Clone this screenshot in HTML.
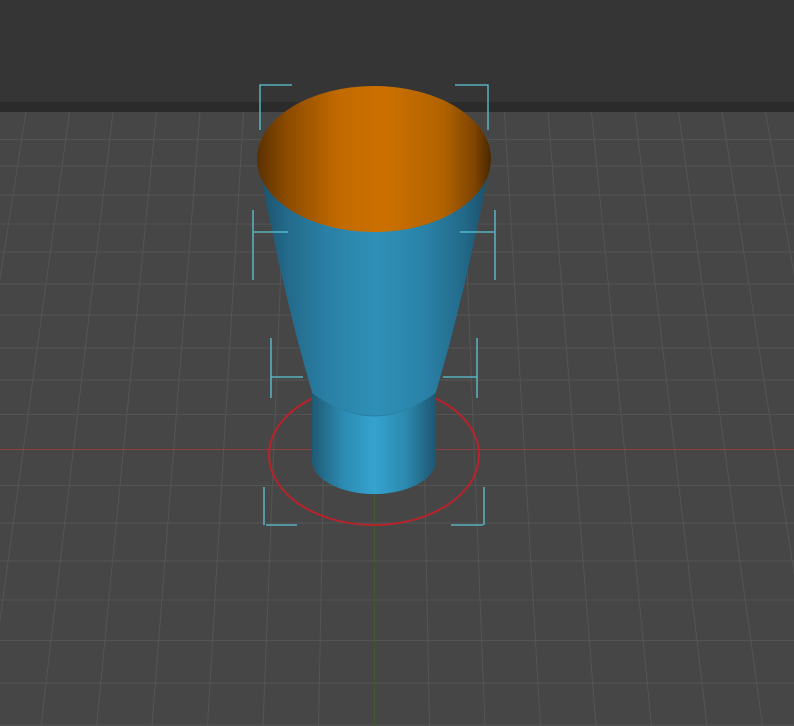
<!DOCTYPE html>
<html><head><meta charset="utf-8"><style>
html,body{margin:0;padding:0;background:#464646;}
svg{display:block}
</style></head><body>
<svg width="794" height="726" viewBox="0 0 794 726" xmlns="http://www.w3.org/2000/svg">
<defs>
<linearGradient id="blue" x1="0" x2="1" y1="0" y2="0">
<stop offset="0" stop-color="#1b4f68"/>
<stop offset="0.12" stop-color="#23698a"/>
<stop offset="0.3" stop-color="#2a80a6"/>
<stop offset="0.5" stop-color="#2f8fb6"/>
<stop offset="0.7" stop-color="#2a84aa"/>
<stop offset="0.88" stop-color="#236a8a"/>
<stop offset="1" stop-color="#1a4d66"/>
</linearGradient>
<linearGradient id="cyl" x1="0" x2="1">
<stop offset="0" stop-color="#1f5a74"/>
<stop offset="0.25" stop-color="#2c8bb2"/>
<stop offset="0.5" stop-color="#35a3cf"/>
<stop offset="0.75" stop-color="#2c8ab0"/>
<stop offset="1" stop-color="#1d5670"/>
</linearGradient>
<linearGradient id="org" x1="0" x2="1">
<stop offset="0" stop-color="#5a3000"/>
<stop offset="0.12" stop-color="#8a4a00"/>
<stop offset="0.35" stop-color="#c26a00"/>
<stop offset="0.55" stop-color="#cc7000"/>
<stop offset="0.8" stop-color="#b06200"/>
<stop offset="0.93" stop-color="#7e4400"/>
<stop offset="1" stop-color="#4a2800"/>
</linearGradient>
</defs>
<rect x="0" y="0" width="794" height="102" fill="#353535"/>
<rect x="0" y="102" width="794" height="10" fill="#2b2b2b"/>
<rect x="0" y="112" width="794" height="614" fill="#464646"/>
<g id="grid" stroke="#545454" stroke-width="1"></g>
<line x1="0" y1="449.5" x2="794" y2="449.5" stroke="#8a4040" stroke-width="1"/>
<line x1="374.5" y1="494" x2="374.5" y2="726" stroke="#3f5a32" stroke-width="1"/>
<ellipse cx="374" cy="455" rx="105" ry="70" fill="none" stroke="#b8232b" stroke-width="2"/>
<path d="M258,160 Q282,290 312,392 L312,460 A62,34 0 0 0 436,460 L436,392 Q466,290 491,160 Z" fill="url(#blue)"/>
<path d="M312,392 Q374,440 436,392 L436,460 A62,34 0 0 1 312,460 Z" fill="url(#cyl)"/>
<path d="M312,392 Q374,440 436,392" fill="none" stroke="#2a7fa3" stroke-width="1"/>
<ellipse cx="374" cy="159" rx="117" ry="73" fill="url(#org)"/>
<g stroke="#5cc6d6" stroke-width="1.3" fill="none">
<path d="M292,85 H260 V130"/>
<path d="M455,85 H488 V130"/>
<path d="M288,232 H254 M253,210 V280"/>
<path d="M460,232 H494 M495,210 V280"/>
<path d="M303,377 H271 M271,338 V398"/>
<path d="M443,377 H477 M477,338 V398"/>
<path d="M297,525 H266 M264,487 V525"/>
<path d="M451,525 H483 M484,487 V525"/>
</g>
</svg>
<script>
var g=document.getElementById('grid'),s='';
[139.5,166,195,224,252,284,315,348,380,414.5,485.5,523,561,600,640.5,683,725].forEach(function(y){s+='<line x1="0" x2="794" y1="'+y+'" y2="'+y+'"/>';});
for(var k=-10;k<=10;k++){if(k==0)continue;var t=374+43.5*k,b=374+55.5*k;s+='<line x1="'+t+'" y1="112" x2="'+b+'" y2="726"/>';}
s+='<line x1="374.5" y1="112" x2="374.5" y2="494"/>';
g.innerHTML=s;
</script>
</body></html>
